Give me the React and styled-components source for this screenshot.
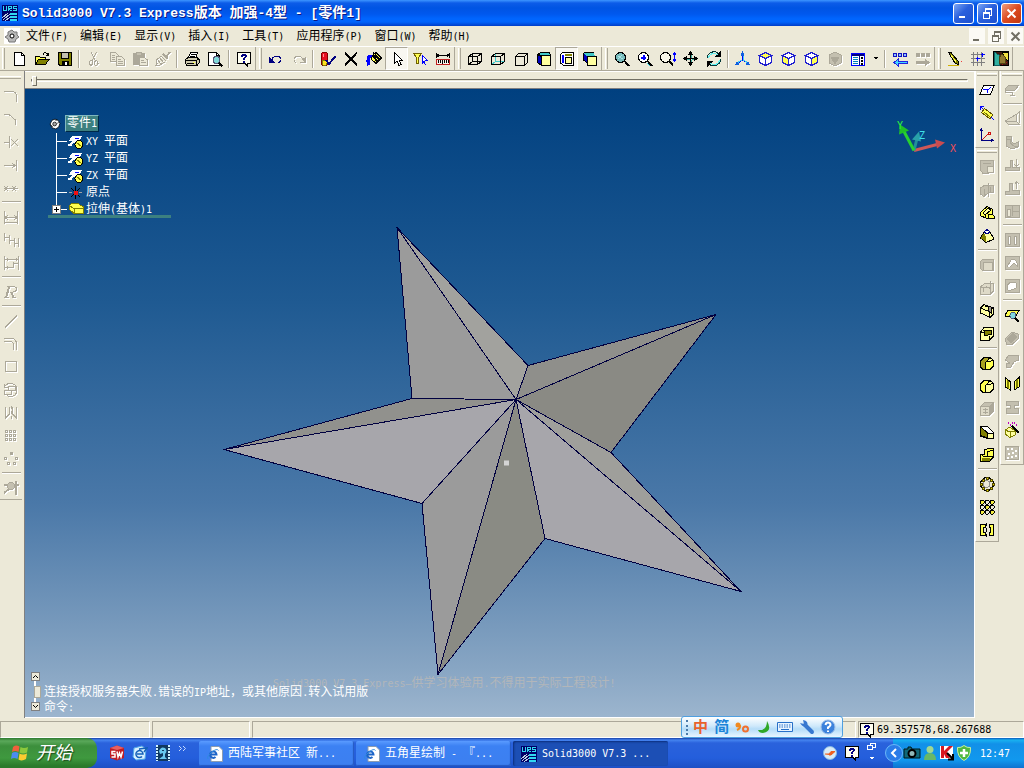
import React from 'react';
import styled, { createGlobalStyle, css } from 'styled-components';

const Global = createGlobalStyle`
  * { box-sizing: border-box; }
  html, body, #root { height: 100%; }
  body {
    margin: 0;
    overflow: hidden;
    background: #ece9d8;
    color: #000;
    font: 12px/16px "Liberation Sans", "Noto Sans CJK SC", sans-serif;
  }
  button, input { font: inherit; color: inherit; margin: 0; padding: 0; border: 0; background: none; }
  button { white-space: nowrap; cursor: default; }
  ul { list-style: none; margin: 0; padding: 0; }
  svg { display: block; flex: none; }
`;

/* ---------- text ---------- */

const Mono = styled.span`
  font-family: ${(p) => (p.$large ? '"Liberation Mono"' : '"DejaVu Sans Mono"')}, monospace;
  font-size: ${(p) => (p.$large ? 13 : 10)}px;
`;

function Txt({ children, large }) {
  return String(children)
    .split(/([\x20-\x7e—]+)/)
    .filter(Boolean)
    .map((part, i) =>
      /^[\x20-\x7e—]/.test(part) ? <Mono key={i} $large={large}>{part}</Mono> : <React.Fragment key={i}>{part}</React.Fragment>
    );
}

/* ---------- icons: lists of [path, stroke, fill, width] ---------- */

const K = '#000';
const N = '#000080';
const B = '#0000ff';
const Y = '#ffff50';
const L = '#ffffa0';
const O = '#808000';
const T = '#40c8c8';
const W = '#fff';
const G = '#aca899';
const D = '#c4c0b0';

const cube = (front, top, side, line) => [
  ['M1.5 5.5L5.5 1.5H14.5V10.5L10.5 14.5H1.5Z', line, front],
  ['M1.5 5.5L5.5 1.5H14.5L10.5 5.5Z', line, top],
  ['M10.5 5.5L14.5 1.5V10.5L10.5 14.5Z', line, side],
];
const isoCube = (a, b, c, line = '#2020d0') => [
  ['M7.5 1.5L13.5 4.5L7.5 7.5L1.5 4.5Z', line, a],
  ['M1.5 4.5L7.5 7.5V14.5L1.5 11.5Z', line, b],
  ['M13.5 4.5L7.5 7.5V14.5L13.5 11.5Z', line, c],
];
const viewCube = (left, top, front) => [
  ['M1.5 3.5L4.5 1.5H13.5L14.5 4.5H5.5Z', K, top],
  ['M1.5 3.5L5.5 5.5V14.5L1.5 11.5Z', K, left],
  ['M5.5 4.5H14.5V14.5H5.5Z', K, front],
];
const roundBlock = (line, dark, light, top) => [
  ['M1.5 6L5 2.5H11L14.5 5.5V11L11 14.5H4L1.5 12Z', line, light],
  ['M1.5 6L5 2.5H11L8 6L6 8V14.5H4L1.5 12Z', line, dark],
  ['M6 8L8 6H12L14.5 5.5V11L11 14.5H6Z', line, top],
];

const icons = {
  file: [['M3.5 1.5H10.5L13.5 4.5V14.5H3.5Z', K, W], ['M10.5 1.5V4.5H13.5', K]],
  open: [['M1.5 13.5V5.5H5.5L6.5 6.5H11.5V8.5', K, Y], ['M1.5 13.5L4.5 8.5H15L11.5 13.5Z', K, O], ['M9 3.5C10 1 13 1 14.5 4.5M14.5 1.5V4.5H11.5', K]],
  save: [['M1.5 1.5H14.5V14.5H3L1.5 13Z', K, O], ['M4.5 1.5H11.5V7.5H4.5Z', K, D], ['M5.5 10.5H11.5V14.5H5.5Z', K, K], ['M9 11V14', W, 'none', 2]],
  cut: [['M5 1L9.5 10M10.5 1L6 10', G], ['M6 10A2 2.2 0 1 1 3 11.5A2 2 0 0 1 6 10M9.5 10A2 2.2 0 1 0 12 11.5A2 2 0 0 0 9.5 10', G]],
  copy: [['M1.5 1.5H6.5L9.5 4.5V10.5H1.5Z', G, '#ece9d8'], ['M3 4.5H6M3 6.5H6M3 8.5H6', G], ['M7.5 5.5H12.5L15.5 8.5V14.5H7.5Z', G, '#ece9d8'], ['M9 8.5H12M9 10.5H14M9 12.5H14', G]],
  paste: [['M1.5 2.5H12.5V13.5H1.5Z', G, G], ['M4.5 1H9.5V4H4.5Z', G, D], ['M7.5 6.5H12.5L15.5 9V14.5H7.5Z', G, '#ece9d8'], ['M9 9.5H12M9 11.5H14', G]],
  brush: [['M15 1L11 6', G, 'none', 2], ['M8 3L13 8', G, 'none', 2], ['M6 5L11 10M4 6L9 12M2 8L6 13M1 11L3 13', G], ['M10 11L4 14.5H1L2 8L7 5', G]],
  print: [['M4.5 6.5L6.5 1.5H13.5L12 6.5', K, W], ['M7 3.5H12M6 5.5H11', K], ['M1.5 8.5L4 6.5H13L15 8.5V12L13 14.5H3L1.5 12Z', K, '#d0ccb0'], ['M1.5 9.5H12V14M12 9.5L15 7.5M3 12H10', K], ['M9 11.5H11', Y]],
  preview: [['M1.5 1.5H9.5L12.5 4.5V14.5H1.5Z', K, W], ['M9.5 1.5V4.5H12.5', K], ['M13 9A3.5 3.5 0 1 1 6 9A3.5 3.5 0 1 1 13 9', '#557', '#80d8d8'], ['M12 12L15.5 15.5', K, 'none', 2]],
  help: [['M1.5 1.5H14.5V12.5H11.5V15L9 12.5H1.5Z', K, '#fffff0'], ['M5 4H6V3H10V4H11V6H10V7H9V9H7V7H8V6H9V5H7V6H5ZM7 10H9V12H7Z', 'none', N]],
  undo: [['M1.5 6V11.5H7M2 11L5 8', N, N], ['M4 8C6 4.5 14 4 13 9.5L10.5 12', N]],
  redo: [['M14.5 6V11.5H9L14 11L11 8', G, G], ['M12 8C10 4.5 2 4 3 9.5L5 12', G]],
  light: [['M1.5 4C1.5 0 7.5 0 7.5 4V12C7.5 16 1.5 16 1.5 12Z', '#800000', '#e81020'], ['M2 9H7V12C7 15.5 2 15.5 2 12Z', O, '#ffe020'], ['M3.5 3V6', '#ff9090'], ['M6 9L9 13L15.5 5', N, 'none', 2]],
  cross: [['M2 1.5L14 14.5M14 1.5L2 14.5', K, 'none', 2]],
  paint: [['M6 5L10 1.5L15.5 7L10 12.5L5 8Z', K, Y], ['M9 4L14 9M7 5L12 11', K, 'none', 2], ['M1.5 14C0 8 1 4 6 4L3.5 8V13Z', B, B], ['M7.5 1V6', K]],
  arrow: [['M5.5 1.5V12L8 10L10 14.5L12 13.5L10 9H13Z', K, W]],
  filter: [['M1.5 2.5H9.5L6.5 6.5V12.5H4.5V6.5Z', '#706000', Y], ['M10.5 4.5V12L12 10.5L13.5 14M10.5 4.5L15 9H12.5', B, W]],
  ruler: [['M1.5 2V7M14.5 2V7', K], ['M2 4.5H14M4 3L2 4.5L4 6M12 3L14 4.5L12 6', K], ['M1.5 8.5H14.5V13.5H1.5Z', '#c02020', '#f8f4ec'], ['M3.5 9V12M5.5 9V12M7.5 9V13M9.5 9V12M11.5 9V12M13.5 9V12', K]],
  wire1: [['M1.5 5.5H10.5V13.5H1.5ZM5.5 2.5H14.5V10.5H5.5ZM1.5 5.5L5.5 2.5M10.5 5.5L14.5 2.5M10.5 13.5L14.5 10.5M1.5 13.5L5.5 10.5', K]],
  wire2: [['M5.5 3V10.5H14M1.5 13.5L5.5 10.5', T], ['M1.5 5.5H10.5V13.5H1.5ZM1.5 5.5L5.5 2.5H14.5V10.5L10.5 13.5M10.5 5.5L14.5 2.5', K]],
  wire3: [['M2.5 5.5H11.5V14.5H2.5ZM2.5 5.5L5.5 2.5H14.5V11.5L11.5 14.5M11.5 5.5L14.5 2.5', K]],
  shade1: viewCube('#0000c0', T, L),
  shade2: [['M1.5 3.5L3.5 1.5H14.5V14.5H4.5L1.5 12Z', K, W], ['M4 4V12', B, 'none', 2], ['M6 4H13', O, 'none', 2], ['M6.5 6.5H12.5V12.5H6.5Z', K, L]],
  shade3: [['M1.5 2.5L3 1.5H11.5V5H5.5V12L1.5 9Z', K, '#0000c0'], ['M3 2.5H11L13 5H5.5Z', T, T], ['M5.5 5.5H14.5V14.5H5.5Z', K, L]],
  zoomAll: [['M11.5 6.5A5 5 0 1 1 1.5 6.5A5 5 0 1 1 11.5 6.5', K, '#78bcbc'], ['M10.5 10L15 15', K, 'none', 2], ['M4 5L9 8M4 8L8 4', '#a8e0e0']],
  zoomIn: [['M11.5 6.5A5 5 0 1 1 1.5 6.5A5 5 0 1 1 11.5 6.5', K, W], ['M6.5 4V9M4 6.5H9', B, 'none', 2], ['M10.5 10L15 15', K, 'none', 2], ['M10 12L13 15', '#40d8e8']],
  zoomDrag: [['M10.5 6.5A5 5 0 1 1 .5 6.5A5 5 0 1 1 10.5 6.5', K, '#f8f6e8'], ['M9 10L13 14.5', K, 'none', 2], ['M14.5 2V10M13 3.5L14.5 2L16 3.5M13 8.5L14.5 10L16 8.5', B]],
  pan: [['M7.5 1V15M1 7.5H15', K], ['M8.5 3V7M8.5 9V13M3 8.5H7M9 8.5H13', '#40b0a0'], ['M7.5 .5L5.5 3.5H9.5ZM7.5 14.5L5.5 11.5H9.5ZM.5 7.5L3.5 5.5V9.5ZM14.5 7.5L11.5 5.5V9.5Z', K, K]],
  rotate: [['M1.5 7C1.5 0 11 -1 13 4M14.5 8C14.5 15 5 17 3 12', '#003838'], ['M14.5 1V5.5H10ZM1.500 15V10.5H6Z', K, K], ['M2.500 7C3.500 2 9 1 11.500 4M13.500 9C12.500 14 7 15 4.500 12', '#60f0f0']],
  axes: [['M7.5 2V9L2 13M7.5 9L14 13', B], ['M8.5 4V9L13 12M6.5 9L2 12', '#40d0f0'], ['M7.5 1L6.5 4H8.5ZM1 13.5L2 11.5L4 13ZM14.5 13.5L13 11.5L11.5 13Z', '#1060e0', '#1060e0']],
  isoTop: isoCube(Y, W, W),
  isoLeft: isoCube(W, Y, W),
  isoRight: isoCube(W, W, Y),
  isoOff: [['M8 1L14 4V12L8 15L2 12V4Z', G, D], ['M4 6H12L8 13Z', G, G]],
  list: [['M1.5 2.5H14.5V14.5H1.5Z', B, W], ['M2 4H14', N, 'none', 2], ['M3 6.5H8M3 8.5H8M3 10.5H8M3 12.5H8', '#0080c0'], ['M9.5 4V14', N], ['M11 7H13M11 10H13M11 13H13', K, 'none', 2]],
  caret: [['M0 6H5L2.5 8.5Z', 'none', K]],
  backBars: [['M1.5 2.5H4.5V5.5H1.5ZM6.5 2.5H9.5V5.5H6.5ZM11.5 2.5H14.5V5.5H11.5Z', '#1010c0', '#90c0ff'], ['M2 11.5L6 8V10.5H15V12.5H6V15Z', '#2020e0', '#40d8ff']],
  fwdBars: [['M1.5 2.5H4.5V5.5H1.5ZM6.5 2.5H9.5V5.5H6.5ZM11.5 2.5H14.5V5.5H11.5Z', G, G], ['M14 11.5L10 8V10.5H1V12.5H10V15Z', G, G]],
  pencil: [['M1.5 1.500L4 1.500L11 10L11.500 13.500L8 12Z', K, O], ['M4 4L9 11', Y], ['M1 14.5H12', '#d0b000'], ['M14 10.5H15', '#f04040']],
  grid: [['M3.5 1V15M7.5 1V15M11.5 1V15M1 3.5H15M1 7.5H15M1 11.5H15', '#808080'], ['M5.500 7.500H9.500M7.500 6V10M11 3.500H15M12.500 1.500V5.500', B]],
  exit: [['M.5 .5H15.5V14.5H.5Z', K, '#401810'], ['M1 1L6 4V14H1Z', '#106060', '#30b0a0'], ['M9 1H15V10L12 7Z', K, '#f0e040'], ['M9 14L11 9L14 12', '#a01010', '#c02020'], ['M6 7L9 3L12 6V12H6Z', '#504010', '#907830']],

  arc: [['M1 3.5H9Q13.5 4 13.5 8V14', G]],
  chamfer: [['M1 3.5H6L12.5 9V14', G]],
  trim: [['M1 8.5H6M6.5 2V14M8 5L15 12M15 5L8 12', G]],
  extend: [['M1 8.5H12M9 6L12 8.5L9 11M13.5 3V14', G]],
  split: [['M1 8.5H15M1 6L5 11M5 6L1 11M9 6L13 11M13 6L9 11', G]],
  dim1: [['M1.5 2V15M14.5 2V15M1 13.5H15M2 8.5H14M5 6L2 8.5L5 11M11 6L14 8.5L11 11', G]],
  dim2: [['M1.5 1V9M6.5 3V12M11.5 6V15M15.5 6V15M2 5.5H6M7 8.5H11M12 11.5H15', G]],
  dim3: [['M1.5 1V15M15.5 1V15M2 4.5H15M2 12.5H10V7M10 8.5H15M4 3V6M13 3V6M4 11V14', G]],
  rx: [['M6 3L3 14M8 8L11 14', G, 'none', 2], ['M4 2.5H11Q15 4 12.5 7.5L7 8.500M12 3Q15 4 13 7M1 13.5H6M9 13.5H13', G]],
  line: [['M2 14.5L14 2.5', G, 'none', 1]],
  offset: [['M1 2.5H9Q13.5 3 13.5 8V14M1 5.5H7Q10.5 6 10.5 9V14', G]],
  rect: [['M2.5 2.5H13.5V12.5H2.5Z', G]],
  spin: [['M5.5 4.5H12.5V8.5H5.5ZM1.5 8.5H8.5V12.5H1.5ZM1 5C5 -1 15 1 14 9C13 15 6 16 4 13M1 2V5H5', G]],
  mirror: [['M2.5 2V13L6.5 9V2M13.5 2V13L9.5 9V2M8 1V4M8 6V9M8 11V14', G]],
  pattern: [['M2.5 2.5H4.5V4.5H2.5ZM6.5 2.5H8.5V4.5H6.5ZM10.5 2.5H12.5V4.5H10.5ZM2.5 6.5H4.5V8.5H2.5ZM6.5 6.5H8.5V8.5H6.5ZM10.5 6.5H12.5V8.5H10.5ZM2.5 10.5H4.5V12.5H2.5ZM6.5 10.5H8.5V12.5H6.5ZM10.5 10.5H12.5V12.5H10.5Z', G]],
  ring: [['M7 1.5H9V3.5H7Z', G, G], ['M1.5 6.5H3.5V8.5H1.5ZM12.5 6.5H14.5V8.5H12.5ZM4.5 11.5H6.5V13.5H4.5ZM10.5 11.5H12.5V13.5H10.5Z', G]],
  query: [['M1 5H7M1 13L6 9M13 1V15M11 5H16', G, 'none', 2], ['M11.5 6A3.5 3.5 0 1 1 4.5 6A3.5 3.5 0 1 1 11.5 6', G, D]],

  plane: [['M4.5 3.5H15L11.5 12.5H1Z', K, W], ['M4 7.5H9L8 11M12 5L10 7', B]],
  axis: [['M5.5 3.5L14 10L11 14L2.5 7.5Z', '#605000', Y], ['M5 7L11 12', O], ['M1 1L4 4M1.5 5V1.5H5M12 12L15 15', B]],
  csys: [['M2.5 1.5V12.5H14M1 3L2.5 1L4 3M12 11L14 12.5L12 14', N], ['M3 12L10 5', '#d01010'], ['M9 4H11V6H9Z', '#d01010']],
  gExtrude: [['M1.5 1.5H14.5V9H9V14.5H4L1.5 11Z', G, D], ['M4 4.500H12M8.500 7.500H14.5V13.5H8.5Z', G, '#ece9d8']],
  gRevolve: [['M1.5 6L6 3H14V10H10L5 14.5L1.5 12ZM5 7V14M9 1V15M11 5V10', G, D]],
  sweep: [['M1 8L8 1.5L13 4V9L15 11V13.500H8L2 11Z', K, Y], ['M4 8L9 3L12 5L6 10Z', K, L], ['M6.500 10V13M9 9.500V13M13 9L9 10', K]],
  loft: [['M5 4L1.5 10L7 14.5L15 11L11 4Z', K, L], ['M5 4L8 1.5L11 4L8 6Z', N, W], ['M5 6L6.500 9V13L2.500 10Z', O, O]],
  gCut: [['M1.5 4.500L3.5 2.5H14.5V13.5H3.500L1.500 11.500Z', G, D], ['M4.500 5.500H13.500V13.500H4.500Z', G, '#dedac8']],
  gCutRev: [['M1.5 7L6 3H14.5V11L11 14.5H1.5Z', G, '#dedac8'], ['M4 12C4 6 9 6 11 9V1M11 9V15M1.5 7H11', G]],
  sweepCut: [['M1.5 5L5 1.5L14.5 5V11L11 14.5L1.5 10Z', K, L], ['M1.5 5L10 8.5V14M10 8L14 5', K], ['M6 3L9 4V8L12 10V5L14.5 5', K, '#a09890']],
  loftCut: [['M1.5 6L5 1.5H14.5V10L10 14.5H1.5Z', K, L], ['M5 4.5H12V8.5L6 9.500Z', K, O], ['M1.5 6H5M10 10V14', K]],
  round1: roundBlock(K, '#a8a020', L, Y),
  round2: roundBlock(K, Y, L, L),
  gShell: [...cube('#dedac8', D, G, G), ['M4 8.5H9M4 11.5H9M6.5 7V13', G]],
  draft: [['M1.5 2.5H8.5L14.5 8.5V14.5H8.5L1.5 12Z', K, W], ['M1.5 2.5L8.5 9V14L1.5 11.5Z', K, O], ['M8.5 9H14.5V14.5H8.5Z', K, L]],
  rib: [['M1.5 7H5V3L9 1.5H14.5V10L10 14.5H1.5Z', K, Y], ['M1.5 7L4 9H8V5L14 3M8 9H14', K], ['M3 11H10V13H3Z', O, O]],
  circPat: [['M14.500 8A6.500 6.500 0 1 1 1.500 8A6.500 6.500 0 1 1 14.500 8', K], ['M11 8A3.500 3.500 0 1 1 4 8A3.500 3.500 0 1 1 11 8', '#909090'], ['M7 1H9V3H7ZM7 13H9V15H7ZM1 7H3V9H1ZM13 7H15V9H13ZM3 3H5V5H3ZM11 3H13V5H11ZM3 11H5V13H3ZM11 11H13V13H11Z', '#504800', '#e8d800', 1]],
  rectPat: [['M2 3.5H14M2 8H14M2 12.5H14', K], ...[3, 8, 13].flatMap((x) => [3, 8, 13].map((y) => [`M${x - 2} ${y - 1}L${x - 1} ${y - 2}H${x + 1}L${x + 2} ${y - 1}V${y + 1}L${x + 1} ${y + 2}H${x - 1}L${x - 2} ${y + 1}Z`, K, (x + y) % 2 ? '#eeeada' : '#f0e840']))],
  mirrorF: [['M1.5 2.5H6V5.5H4.5V10.5H6V13.5H1.5ZM14.5 2.5H10V5.5H11.5V10.5H10V13.5H14.5Z', K, Y], ['M7.500 1V4M7.500 6V10M7.500 12V15', K]],
  gBase: [['M1 7L5 3H15L11 8H1Z', G, D], ['M1 7V10H8V13H6M8 13H11', G]],
  gBend: [['M1 10L12 3.5V10L15 13H4Z', G, '#dedac8'], ['M1 10H12M12 4L15 1V12', G]],
  gFlange: [['M2 2H7V7L10 10L14 8V13L8 15L2 12Z', G, D], ['M2 5H6V9L10 12H14', G]],
  gUnfold: [['M1 10.5H6V5Q6 3 8 3V10H15V13H1Z', G, D], ['M12.500 2V9M10 7L12.500 9L15 7', G]],
  gFold: [['M1 11H5V5Q5 3 8 3V10H15V14H1Z', G, D], ['M12.500 9V2M11 4L12.500 2L15 4', G]],
  gRelief: [['M1 2H15V14H1Z', G, D], ['M3 6H6V13H3ZM8 3V13M8 8H15', G, '#ece9d8']],
  gLouver: [['M1 1.5H15V14.5H1Z', G, D], ['M4 4H6V12H4ZM10 4H12V12H10Z', G, W]],
  gForm: [['M1 1.5H15V14.5H1Z', G, D], ['M3 12L7 5Q11 3 13 8V11L10 8L6 12', G, W]],
  gHole: [['M1 1.5H15V14.5H1Z', G, D], ['M3 9Q4 4 9 4Q14 4 12 10Q8 13 4 12Z', G, W]],
  inspect: [['M1 8L4 3.5H15L12 9H1Z', K, Y], ['M1 9H11', K], ['M12 8.5A3 3 0 1 1 6 8.5A3 3 0 1 1 12 8.5', '#506080', '#80d8e0'], ['M11 11L15 15', K, 'none', 2]],
  gTube: [['M1 9L8 2L14 4V9L8 14.5H3Z', G, D], ['M3 9L9 3L13 7L7 13Z', G, G]],
  gFillet: [['M1 7L5 2H14.5V7L10 9L7 14H2V11L6 10Z', G, D]],
  mirrorBook: [['M1.500 1.5L6.500 6V14L1.500 11ZM15 1.5L10 6V14L15 11Z', K, Y], ['M3 4L4 5V12L3 11ZM13 4L12 5V12L13 11Z', O, O]],
  gTee: [['M2 2H14V6H10V9H14V14H2V9H6V6H2Z', G, D]],
  wand: [['M1 8L6 5L11 9V13L6 15.5L1 12ZM1 8L6 10L11 9M6 10V15', O, L], ['M8 4L15 11', K, 'none', 2], ['M4 1H5M8 1H9M6 3H7M12 3H13M10 1H11', '#c000c0', 'none', 2]],
  gDots: [['M1.5 1.5H14.5V14.5H1.5Z', G, D], ['M4 3V5M8 3V5M12 5V7M5 8V10M9 7V9M4 12V14M8 11V13M12 10V12', W, 'none', 2]],

  gear: [['M8 2L10 4L13 4L13 7L15 9L12 11L11 14H5L4 11L1 9L4 7L4 4Z', '#777', '#b8b8b8'], ['M10 8A2 2 0 1 1 6 8A2 2 0 1 1 10 8', K, W]],
  gearTree: [['M8 1.5L12 3L14.5 7L13 12L9 14.5L4 13L1.5 8L4 3Z', K, W], ['M10 8A2.5 2.5 0 1 1 5 8A2.5 2.5 0 1 1 10 8M2 9L5 12M10 2L9 4M13 6L11 7', K, '#aaa']],
  planeTree: [['M4.500 2.5H13.5L11 6.500H1.500Z', W, W], ['M7 4.5H11M4 8.500H7', B], ['M0 10.5H3L5 7.500H9', W, 'none', 2], ['M15 10.5A4 4 0 1 1 7 10.5A4 4 0 1 1 15 10.5', K, Y], ['M8 8L14 13', O]],
  origin: [['M7.500 1V14M3 3L12 12M12 3L3 12', K], ['M1 7.500H4M11 7.500H14', '#a0a0a0'], ['M6.500 6.500H9.500V9.500H6.500Z', '#f01010', '#f01010']],
  block: [['M1 3.5L4 1.5H10L15.5 5V11.5H6L1 7Z', O, Y], ['M1 3.5L6 6.5H15M6 6.5V11', O]],
  urs: [['M0 0H16V16H0Z', 'none', '#000068'], ['M1.5 1V5.5H4.500V1M6.5 6V1.5H9.500V3.5H6.5L9.500 6M14.500 1.5H11.5V3.5H14.5V5.5H11', '#30d8f0'], ['M0 13L6 8M1 15L8 9M3 16L8 12', '#c0d0e0'], ['M8 9H15M8 12H15M8 15H15', '#30d8f0', 'none', 2]],
};

const Svg = styled.svg`
  shape-rendering: ${(p) => (p.$smooth ? 'auto' : 'crispEdges')};
  ${(p) => p.$off && 'filter: drop-shadow(1px 1px 0 #fff);'}
`;

function Icon({ name, size = 16, width = 16, smooth }) {
  const parts = icons[name];
  const off = parts.some((p) => p[1] === G);
  return (
    <Svg width={width === 16 ? size : width} height={size} viewBox={`0 0 ${width} 16`} $off={off} $smooth={smooth} aria-hidden="true">
      {parts.map(([d, stroke, fill = 'none', w = 1], i) => (
        <path key={i} d={d} stroke={stroke} fill={fill} strokeWidth={w} />
      ))}
    </Svg>
  );
}

/* ---------- window frame ---------- */

const AppWindow = styled.div`
  position: relative;
  display: flex;
  flex-direction: column;
  height: 100vh;
  overflow: hidden;
`;

const TitleBar = styled.header`
  display: flex;
  align-items: center;
  gap: 4px;
  height: 26px;
  flex: none;
  padding: 0 2px;
  background: linear-gradient(#3d95ff 0, #0c5ce8 3px, #0054e3 8px, #0058ee 14px, #0066ff 19px, #0063fb 22px, #003dc8 26px);
`;

const Title = styled.h1`
  flex: 1;
  margin: 0;
  font-size: 14px;
  line-height: 20px;
  font-weight: bold;
  color: #fff;
  text-shadow: 1px 1px 0 #0a1883;
  white-space: nowrap;
`;

const CaptionButtons = styled.div`
  display: flex;
  gap: 3px;
`;

const CaptionButton = styled.button`
  display: grid;
  place-items: center;
  width: 21px;
  height: 21px;
  border: 1px solid #fff;
  border-radius: 3px;
  background: ${(p) =>
    p.$close ? 'linear-gradient(135deg, #f0a080, #dc4a20 50%, #c03810)' : 'linear-gradient(135deg, #7ba6f5, #2a60dc 45%, #1c50d0)'};
`;

const MenuBar = styled.nav`
  display: flex;
  align-items: center;
  height: 20px;
  flex: none;
  padding: 0 1px 0 4px;
`;

const MenuIcon = styled.span`
  width: 16px;
  background: #fff;
`;

const MenuButton = styled.button`
  padding: 0 6px;
  line-height: 20px;
`;

const MdiButtons = styled.div`
  display: flex;
  gap: 3px;
  margin-left: auto;
`;

const MdiButton = styled.button`
  display: grid;
  place-items: center;
  width: 16px;
  height: 16px;
  background: #fbfaf5;
`;

/* ---------- toolbars ---------- */

const ToolStrip = styled.div`
  display: flex;
  align-items: stretch;
  height: 25px;
  flex: none;
  border-top: 1px solid #fff;
  border-bottom: 1px solid #aca899;
`;

const Band = styled.div`
  display: flex;
  align-items: center;
  border-right: 1px solid #aca899;
  padding-left: 1px;
  &:first-child { padding-left: 0; }
`;

const Grip = styled.span`
  align-self: stretch;
  width: 3px;
  margin: 1px 2px 1px 2px;
  border-left: 1px solid #fff;
  border-right: 1px solid #aca899;
`;

const VerticalRule = styled.span`
  width: 2px;
  height: 18px;
  margin: 0 2px;
  border-left: 1px solid #aca899;
  border-right: 1px solid #fff;
`;

const ToolButton = styled.button`
  display: grid;
  place-items: center;
  flex: none;
  width: ${(p) => (p.$narrow ? 13 : 23)}px;
  height: 23px;
  ${(p) =>
    p.$active &&
    css`
      background: #f8f7f1;
      border: 1px solid;
      border-color: #aca899 #fff #fff #aca899;
    `}
`;

const bands = [
  'file open save | cut copy paste brush | print preview | help',
  'undo redo | light cross paint *arrow filter ruler',
  'wire1 wire2 wire3 shade1 *shade2 shade3',
  'zoomAll zoomIn zoomDrag pan rotate | axes isoTop isoLeft isoRight isoOff list caret | backBars fwdBars',
  'pencil grid exit',
];

const Body = styled.div`
  display: flex;
  flex: 1;
  min-height: 0;
`;

const SideBar = styled.div`
  display: flex;
  flex: none;
  align-items: flex-start;
  width: ${(p) => p.$width}px;
  gap: 1px;
`;

const SideColumn = styled.div`
  display: flex;
  flex-direction: column;
`;

const SideTools = styled.div`
  display: flex;
  flex-direction: column;
  align-items: center;
  width: ${(p) => (p.$left ? 22 : 24)}px;
  border-left: ${(p) => (p.$left ? 0 : 1)}px solid #fff;
  border-right: ${(p) => (p.$left ? 0 : 1)}px solid #aca899;
  border-bottom: 1px solid #aca899;
`;

const SideGrip = styled.span`
  align-self: stretch;
  height: 3px;
  margin: ${(p) => (p.$left ? '5px 1px 5px 0' : '2px 1px')};
  border-top: 1px solid #fff;
  border-bottom: 1px solid #aca899;
`;

const HorizontalRule = styled.span`
  width: 19px;
  height: 2px;
  margin: 2px 0;
  border-top: 1px solid #aca899;
  border-bottom: 1px solid #fff;
`;

const leftTools =
  'arc chamfer trim extend split | dim1 dim2 dim3 | rx | line offset rect spin mirror pattern ring | query';
const rightToolsA = 'plane axis csys';
const rightToolsB =
  'gExtrude gRevolve sweep loft | gCut gCutRev sweepCut loftCut | round1 round2 gShell draft rib | circPat rectPat mirrorF';
const rightToolsC =
  'gBase | gBend gFlange gUnfold gFold gRelief | gLouver gForm gHole | inspect gTube gFillet mirrorBook gTee wand gDots';

function Tools({ list, Rule }) {
  return list.split(' ').map((item, i) => {
    if (item === '|') return <Rule key={i} />;
    const name = item.replace('*', '');
    return (
      <ToolButton key={i} aria-label={name} $active={item[0] === '*'} $narrow={name === 'caret'}>
        <Icon name={name} width={name === 'caret' ? 5 : 16} />
      </ToolButton>
    );
  });
}

/* ---------- document area ---------- */

const Workspace = styled.main`
  display: flex;
  flex-direction: column;
  flex: 1;
  min-width: 0;
  border-left: 1px solid #808080;
  border-right: 1px solid #fff;
`;

const SliderStrip = styled.div`
  display: flex;
  align-items: center;
  flex: none;
  height: 18px;
  padding: 0 6px;
  border-top: 1px solid #fff;
  border-bottom: 1px solid #808080;
`;

const HistorySlider = styled.input`
  appearance: none;
  flex: 1;
  height: 10px;
  &::-webkit-slider-runnable-track {
    height: 3px;
    border: 1px solid;
    border-color: #716f64 #fff #fff #716f64;
  }
  &::-webkit-slider-thumb {
    appearance: none;
    width: 5px;
    height: 10px;
    margin-top: -4px;
    background: #ece9d8;
    border: 1px solid;
    border-color: #fff #716f64 #716f64 #fff;
  }
`;

const Viewport = styled.section`
  position: relative;
  flex: 1;
  min-height: 0;
  overflow: hidden;
  background: linear-gradient(#004080 0%, #1f5a92 34%, #4a78a8 66%, #87a5c3 92%, #9cb5ce 100%);
  border-bottom: 1px solid #fff;
`;

const Drawing = styled.svg`
  width: 100%;
  height: 100%;
`;

const Tree = styled.div`
  position: absolute;
  left: 23px;
  top: 25px;
  width: 123px;
  color: #fff;
  border-bottom: 3px solid #3c8080;
  ul { margin-bottom: -3px; }
`;

const TreeRoot = styled.div`
  display: flex;
  align-items: center;
  gap: 4px;
  height: 19px;
  padding-left: 1px;
`;

const TreeName = styled.span`
  padding: 0 1px;
  line-height: 14px;
  background: #3c8080;
  border: 1px solid;
  border-color: #80b8c0 #002848 #002848 #80b8c0;
`;

const TreeItem = styled.li`
  display: flex;
  align-items: center;
  height: 17px;
  padding-left: 8px;
  line-height: 17px;
  white-space: nowrap;
  &::before {
    content: '';
    align-self: stretch;
    border-left: 1px solid #fff;
    margin-bottom: ${(p) => (p.$last ? 8 : 0)}px;
  }
`;

const Branch = styled.span`
  width: ${(p) => (p.$short ? 6 : 10)}px;
  margin-right: 1px;
  border-top: 1px solid #fff;
`;

const Expander = styled.button`
  display: grid;
  place-items: center;
  width: 9px;
  height: 9px;
  margin-left: -5px;
  z-index: 1;
  background: #fff;
  border: 1px solid #808080;
`;

const TreeLabel = styled.span`
  padding-left: 2px;
`;

const Console = styled.div`
  position: absolute;
  left: 5px;
  bottom: 2px;
  display: flex;
  gap: 4px;
  color: #fff;
  white-space: nowrap;
`;

const Scroller = styled.div`
  display: flex;
  flex-direction: column;
  align-items: center;
  width: 10px;
  padding-bottom: 4px;
`;

const ScrollButton = styled.button`
  display: grid;
  place-items: center;
  width: 9px;
  height: 9px;
  background: #ece9d8;
  border: 1px solid #808080;
`;

const ScrollTrack = styled.div`
  display: grid;
  place-items: center;
  width: 2px;
  height: 21px;
  background: #fff;
`;

const ScrollThumb = styled.span`
  width: 7px;
  height: 12px;
  background: #ece9d8;
  border: 1px solid #aca899;
`;

const ConsoleLines = styled.div`
  align-self: flex-end;
  line-height: 15px;
`;

const CommandLine = styled.label`
  display: flex;
  input { width: 240px; outline: 0; }
`;

const Watermark = styled.p`
  position: absolute;
  left: 248px;
  bottom: 26px;
  margin: 0;
  line-height: 14px;
  color: #b2b6ba;
  white-space: nowrap;
`;

/* ---------- status bar, input-method bar, taskbar ---------- */

const StatusBar = styled.footer`
  display: flex;
  gap: 2px;
  height: 20px;
  flex: none;
  padding-top: 3px;
`;

const Pane = styled.div`
  display: flex;
  align-items: center;
  gap: 2px;
  flex: ${(p) => (p.$width ? `0 0 ${p.$width}px` : '1')};
  border: 1px solid;
  border-color: #aca899 #fff #fff #aca899;
  white-space: nowrap;
`;

const ImeBar = styled.div`
  position: absolute;
  right: 181px;
  bottom: 30px;
  display: flex;
  align-items: center;
  justify-content: space-between;
  width: 162px;
  height: 22px;
  padding: 0 4px;
  background: linear-gradient(#fff, #cfe9fb 45%, #b5dcf8 60%, #e9f6ff);
  border: 1px solid #4f9fe0;
  border-radius: 3px;
`;

const ImeButton = styled.button`
  width: 18px;
  font-size: 15px;
  line-height: 18px;
  font-weight: bold;
  color: ${(p) => p.$color};
`;

const DotGrip = styled.span`
  height: 15px;
  border-left: 2px dotted #4a7aa8;
`;

const TaskBar = styled.nav`
  display: flex;
  align-items: stretch;
  flex: none;
  height: 30px;
  background: linear-gradient(#1941a5 0, #4584f0 2px, #2a62dc 5px, #245edc 20px, #1d4fc4 30px);
  color: #fff;
`;

const StartButton = styled.button`
  display: flex;
  align-items: center;
  gap: 6px;
  width: 97px;
  padding-left: 10px;
  font-size: 18px;
  line-height: 24px;
  font-style: italic;
  text-shadow: 1px 1px 1px #1c4a1c;
  background: linear-gradient(#2f7a2f 0, #5aa85a 3px, #3c8f3c 8px, #3f993f 20px, #2b7a2b 28px);
  border-radius: 0 10px 10px 0;
`;

const QuickLaunch = styled.div`
  display: flex;
  align-items: center;
  gap: 7px;
  width: 102px;
  padding-left: 12px;
`;

const TaskList = styled.div`
  display: flex;
  gap: 2px;
  flex: 1;
  padding: 3px 0 2px;
`;

const TaskButton = styled.button`
  display: flex;
  align-items: center;
  gap: 5px;
  width: 155px;
  padding-left: 8px;
  border-radius: 2px;
  background: ${(p) => (p.$active ? '#1c4fb5' : 'linear-gradient(#5a9bff, #3c81f3 5px, #3c7ff0)')};
  box-shadow: ${(p) => (p.$active ? 'inset 1px 1px 2px #0c2f7c' : 'inset -1px -1px 1px #2458c0')};
`;

const TrayIcons = styled.div`
  display: flex;
  align-items: center;
  gap: ${(p) => p.$gap}px;
`;

const Tray = styled.div`
  display: flex;
  align-items: center;
  gap: 2px;
  width: 131px;
  margin-left: 17px;
  background: linear-gradient(#0c59b9 0, #18b1f0 2px, #1290e8 6px, #1198ee 22px, #0f72cf 30px);
`;

const TrayArrow = styled.button`
  width: 16px;
  margin-left: -8px;
`;

const Clock = styled.time`
  margin-left: 7px;
`;

const IeIcon = () => (
  <svg width="16" height="16" viewBox="0 0 16 16" aria-hidden="true">
    <path d="M4 .5H12L15.5 4V15.5H4Z" fill="#fff" stroke="#8c9cb0" />
    <path d="M3.5 8.5H9.5A3.2 3.2 0 1 0 8.5 11" fill="none" stroke="#1c64c8" strokeWidth="2" />
    <path d="M1 13Q-1 11 5 6Q10 2 11.5 4.5" fill="none" stroke="#2f8ae0" />
  </svg>
);

function WindowGlyph({ kind, color = '#fff' }) {
  return (
    <svg width="13" height="13" viewBox="0 0 13 13" fill="none" stroke={color} shapeRendering="crispEdges" aria-hidden="true">
      {kind === 'min' && <path d="M2 10H8" strokeWidth="2" />}
      {kind === 'max' && <path d="M4.5 5V2.5H10.5V8.5H8M4 1.5H11M2.5 5.5H8.5V11.5H2.5ZM2 6.5H9" />}
      {kind === 'close' && <path d="M2.5 2.5L10.5 10.5M10.5 2.5L2.5 10.5" strokeWidth="2" shapeRendering="auto" />}
    </svg>
  );
}

/* star facets around the centre 516,399 */
const facets = [
  ['397,227 412,398', '#9b9b9b'],
  ['397,227 528,365', '#a2a29e'],
  ['716,314 528,365', '#8f8f8b'],
  ['716,314 611,452', '#8a8a84'],
  ['741,591 611,452', '#9f9f9b'],
  ['741,591 545,538', '#a7a6ab'],
  ['438,674 545,538', '#8a8b84'],
  ['438,674 422,503', '#9b9b9b'],
  ['224,449 422,503', '#a7a6ab'],
  ['224,449 412,398', '#91918d'],
];

function Scene() {
  return (
    <Drawing viewBox="25 89 949 627" role="img" aria-label="五角星">
      <g stroke="#000040" strokeWidth="1" strokeLinejoin="round">
        {facets.map(([pts, fill]) => (
          <polygon key={pts} points={`516,399 ${pts}`} fill={fill} shapeRendering="crispEdges" />
        ))}
      </g>
      <rect x="504" y="460" width="5" height="5" fill="#d4d4d4" />
      <path d="M914 150L937 144" stroke="#d05858" strokeWidth="3" />
      <path d="M945 142L935 139L937 148Z" fill="#c84c50" />
      <path d="M914 150L917 138" stroke="#209098" strokeWidth="3" />
      <path d="M919 131L912 139L921 141Z" fill="#28a0a8" />
      <path d="M914 150L904 131" stroke="#28d030" strokeWidth="3" />
      <path d="M900 124L899 134L909 130Z" fill="#20c028" />
      <g fontFamily="DejaVu Sans Mono, monospace" fontSize="10">
        <text x="897" y="128" fill="#30f040">Y</text>
        <text x="919" y="138" fill="#40e0e8">Z</text>
        <text x="950" y="151" fill="#f05058">X</text>
      </g>
    </Drawing>
  );
}

function ModelTree() {
  return (
    <Tree>
      <TreeRoot>
        <Icon name="gearTree" size={12} smooth />
        <TreeName><Txt>零件1</Txt></TreeName>
      </TreeRoot>
      <ul>
        {['XY 平面', 'YZ 平面', 'ZX 平面'].map((t) => (
          <TreeItem key={t}><Branch /><Icon name="planeTree" /><TreeLabel><Txt>{t}</Txt></TreeLabel></TreeItem>
        ))}
        <TreeItem><Branch /><Icon name="origin" /><TreeLabel>原点</TreeLabel></TreeItem>
        <TreeItem $last>
          <Expander aria-label="展开">
            <svg width="5" height="5" viewBox="0 0 5 5" stroke="#000" shapeRendering="crispEdges" aria-hidden="true"><path d="M0 2.5H5M2.5 0V5" /></svg>
          </Expander>
          <Branch $short />
          <Icon name="block" />
          <TreeLabel><Txt>拉伸(基体)1</Txt></TreeLabel>
        </TreeItem>
      </ul>
    </Tree>
  );
}

export default function App() {
  return (
    <AppWindow>
      <Global />
      <TitleBar>
        <Icon name="urs" />
        <Title><Txt large>Solid3000 V7.3 Express版本 加强-4型 - [零件1]</Txt></Title>
        <CaptionButtons>
          <CaptionButton aria-label="最小化"><WindowGlyph kind="min" /></CaptionButton>
          <CaptionButton aria-label="还原"><WindowGlyph kind="max" /></CaptionButton>
          <CaptionButton $close aria-label="关闭"><WindowGlyph kind="close" /></CaptionButton>
        </CaptionButtons>
      </TitleBar>

      <MenuBar>
        <MenuIcon><Icon name="gear" smooth /></MenuIcon>
        {['文件(F)', '编辑(E)', '显示(V)', '插入(I)', '工具(T)', '应用程序(P)', '窗口(W)', '帮助(H)'].map((m) => (
          <MenuButton key={m}><Txt>{m}</Txt></MenuButton>
        ))}
        <MdiButtons>
          <MdiButton aria-label="最小化文档"><WindowGlyph kind="min" color="#716f64" /></MdiButton>
          <MdiButton aria-label="还原文档"><WindowGlyph kind="max" color="#716f64" /></MdiButton>
          <MdiButton aria-label="关闭文档"><WindowGlyph kind="close" color="#716f64" /></MdiButton>
        </MdiButtons>
      </MenuBar>

      <ToolStrip role="toolbar">
        {bands.map((b) => (
          <Band key={b}><Grip /><Tools list={b} Rule={VerticalRule} /></Band>
        ))}
      </ToolStrip>

      <Body>
        <SideBar $width={24}>
          <SideTools $left><SideGrip $left /><Tools list={leftTools} Rule={HorizontalRule} /></SideTools>
        </SideBar>

        <Workspace>
          <SliderStrip>
            <HistorySlider type="range" min="0" max="100" defaultValue="0" aria-label="历史" />
          </SliderStrip>
          <Viewport>
            <Scene />
            <Watermark><Txt>Solid3000 V7.3 Express—供学习体验用.不得用于实际工程设计!</Txt></Watermark>
            <ModelTree />
            <Console>
              <Scroller>
                <ScrollButton aria-label="向上"><svg width="7" height="5" viewBox="0 0 7 5" fill="none" stroke="#000" aria-hidden="true"><path d="M1 4L3.5 1.5L6 4" /></svg></ScrollButton>
                <ScrollTrack><ScrollThumb /></ScrollTrack>
                <ScrollButton aria-label="向下"><svg width="7" height="5" viewBox="0 0 7 5" fill="none" stroke="#000" aria-hidden="true"><path d="M1 1L3.5 3.5L6 1" /></svg></ScrollButton>
              </Scroller>
              <ConsoleLines>
                <div><Txt>连接授权服务器失败.错误的IP地址，或其他原因.转入试用版</Txt></div>
                <CommandLine><span><Txt>命令:</Txt></span><input type="text" /></CommandLine>
              </ConsoleLines>
            </Console>
          </Viewport>
        </Workspace>

        <SideBar $width={49}>
          <SideColumn>
            <SideTools><SideGrip /><Tools list={rightToolsA} Rule={HorizontalRule} /></SideTools>
            <SideTools><SideGrip /><Tools list={rightToolsB} Rule={HorizontalRule} /></SideTools>
          </SideColumn>
          <SideColumn>
            <SideTools><SideGrip /><Tools list={rightToolsC} Rule={HorizontalRule} /></SideTools>
          </SideColumn>
        </SideBar>
      </Body>

      <StatusBar>
        <Pane $width={150} />
        <Pane $width={98} />
        <Pane />
        <Pane $width={166}><Icon name="help" /><Txt>69.357578,68.267688</Txt></Pane>
      </StatusBar>

      <TaskBar>
        <StartButton>
          <svg width="20" height="20" viewBox="0 0 20 20" aria-hidden="true">
            <path d="M3 4Q6 1.5 9.5 3.5L8.5 9Q5 7 2 9Z" fill="#f0603c" />
            <path d="M10.5 4Q14 6 18 4L17 9.5Q13 11.5 9.5 9.5Z" fill="#8cc83c" />
            <path d="M2 10Q5 8 8.5 10L7.5 16Q4 14 1 16Z" fill="#4c8cf0" />
            <path d="M9.5 10.5Q13 12.5 17 10.5L16 16Q12 18.5 8.5 16.5Z" fill="#fccc30" />
          </svg>
          开始
        </StartButton>
        <QuickLaunch>
          <button aria-label="SolidWorks">
            <svg width="16" height="16" viewBox="0 0 16 16" aria-hidden="true"><path d="M1 3L8 .5L15 3V13L8 15.5L1 13Z" fill="#c01c24" /><path d="M1 3L8 5L15 3L8 .5Z" fill="#e86060" /><path d="M6.5 6.5H3V9H6V12H2.5M8 6.5L9 12L10.5 8L12 12L13.5 6.5" fill="none" stroke="#fff" strokeWidth="1.5" /></svg>
          </button>
          <button aria-label="显示桌面">
            <svg width="16" height="16" viewBox="0 0 16 16" aria-hidden="true"><path d="M2 3L10 1L14 4L13 14L4 15L1 12Z" fill="#d8f0ff" stroke="#50a8e8" /><path d="M5 9H11A3.5 3.5 0 1 0 10 11.5M7 4L15 3L12 7" fill="none" stroke="#1460b8" strokeWidth="1.5" /></svg>
          </button>
          <button aria-label="媒体播放器">
            <svg width="16" height="16" viewBox="0 0 16 16" aria-hidden="true"><path d="M1 0H15V16H1Z" fill="#103860" /><path d="M2 0V16M14 0V16" stroke="#d0f0ff" strokeWidth="2" strokeDasharray="2 1" /><path d="M4 6Q6 1 10 3Q13 6 10 9V12L12 14H4L8 11V8L5 9Z" fill="#68c8f0" /><path d="M7 5.5H9" stroke="#103860" fill="none" /></svg>
          </button>
          <button aria-label="更多">
            <svg width="9" height="16" viewBox="0 0 9 16" fill="none" stroke="#c8dcff" aria-hidden="true"><path d="M1 1L3.5 3.5L1 6M5 1L7.5 3.5L5 6" /></svg>
          </button>
        </QuickLaunch>
        <TaskList>
          <TaskButton><IeIcon /><span><Txt>西陆军事社区 新...</Txt></span></TaskButton>
          <TaskButton><IeIcon /><span><Txt>五角星绘制 - 『...</Txt></span></TaskButton>
          <TaskButton $active><Icon name="urs" /><span><Txt>Solid3000 V7.3 ...</Txt></span></TaskButton>
        </TaskList>
        <TrayIcons $gap={7}>
          <svg width="14" height="14" viewBox="0 0 14 14" aria-hidden="true"><circle cx="7" cy="7" r="6.5" fill="#d8ecf8" stroke="#88b8e0" /><path d="M2 8H6L8 5.5H12L8 9H6" fill="#f06020" stroke="#f06020" /></svg>
          <Icon name="help" />
          <svg width="9" height="22" viewBox="0 0 9 22" fill="none" stroke="#fff" shapeRendering="crispEdges" aria-hidden="true"><path d="M3.5 3V1.5H8.5V5.5H6M.5 3.5H5.5V7.5H.5Z" /><path d="M2 15H7L4.5 17.5Z" fill="#fff" stroke="none" /></svg>
        </TrayIcons>
        <Tray>
          <TrayArrow aria-label="隐藏图标">
            <svg width="18" height="18" viewBox="0 0 18 18" aria-hidden="true"><circle cx="9" cy="9" r="8.5" fill="#2a7ce8" stroke="#6cb8f8" /><path d="M11 5L7 9L11 13" fill="none" stroke="#fff" strokeWidth="2" /></svg>
          </TrayArrow>
          <svg width="18" height="16" viewBox="0 0 18 16" aria-hidden="true"><path d="M1 4H5V2H8L9 4H17V13H1Z" fill="#106878" stroke="#001818" /><circle cx="9" cy="8.5" r="3.5" fill="#90b8b8" stroke="#000" strokeWidth="2" /></svg>
          <svg width="14" height="16" viewBox="0 0 14 16" aria-hidden="true"><circle cx="7" cy="4.5" r="3.5" fill="#a0d890" /><path d="M1 15Q1 8 7 8Q13 8 13 15Z" fill="#68b868" /></svg>
          <svg width="16" height="16" viewBox="0 0 16 16" aria-hidden="true"><path d="M1 1H14V14H1Z" fill="#fff" /><path d="M2 1H5V6L10 1H14L8 7L11 13H7L5 9V13H2Z" fill="#d81820" /><path d="M8 8L14 14M14 9V14.5H9" stroke="#000" strokeWidth="2" fill="none" /></svg>
          <svg width="14" height="16" viewBox="0 0 14 16" aria-hidden="true"><path d="M7 .5Q10 3 13.5 2.5Q14 12 7 15.5Q0 12 .5 2.5Q4 3 7 .5Z" fill="#50b840" stroke="#c8f0a0" /><path d="M7 4V12M3 8H11" stroke="#fff" strokeWidth="2.5" /></svg>
          <Clock><Txt>12:47</Txt></Clock>
        </Tray>
      </TaskBar>

      <ImeBar>
        <DotGrip />
        <ImeButton $color="#e8622c">中</ImeButton>
        <ImeButton $color="#1a84d8">简</ImeButton>
        <ImeButton $color="#f08030" aria-label="标点"><svg width="16" height="16" viewBox="0 0 16 16" aria-hidden="true"><circle cx="4" cy="6" r="2.5" fill="#f08a20" /><path d="M6 6Q7 9 3 11" stroke="#f08a20" strokeWidth="2" fill="none" /><circle cx="11.5" cy="10" r="2.5" fill="none" stroke="#f07030" strokeWidth="2" /></svg></ImeButton>
        <ImeButton aria-label="半角"><svg width="16" height="16" viewBox="0 0 16 16" aria-hidden="true"><path d="M11 2Q17 12 7 14Q3 14 2 11Q11 12 11 2Z" fill="#30a828" /></svg></ImeButton>
        <ImeButton aria-label="软键盘"><svg width="16" height="16" viewBox="0 0 16 16" aria-hidden="true"><path d="M.5 3.5H15.5V12.5H.5Z" fill="#e8f4ff" stroke="#2870c8" /><path d="M2 6H14M2 8H14" stroke="#2870c8" strokeDasharray="1.5 1" /><path d="M4 10.5H12" stroke="#2870c8" /></svg></ImeButton>
        <ImeButton aria-label="设置"><svg width="16" height="16" viewBox="0 0 16 16" aria-hidden="true"><path d="M6 6L13 13" stroke="#3878d0" strokeWidth="4" strokeLinecap="round" /><path d="M4 1Q10 2 8 7Q4 9 1 4L5 5Z" fill="#3878d0" /></svg></ImeButton>
        <ImeButton aria-label="帮助"><svg width="16" height="16" viewBox="0 0 16 16" aria-hidden="true"><circle cx="8" cy="8" r="7" fill="#3c82dc" stroke="#a0c0e8" /><path d="M5.5 6Q6 3.5 8 3.5Q10.5 3.5 10.5 6Q10 7.5 8 8.5V10M8 11.5V13" fill="none" stroke="#fff" strokeWidth="2" /></svg></ImeButton>
      </ImeBar>
    </AppWindow>
  );
}
